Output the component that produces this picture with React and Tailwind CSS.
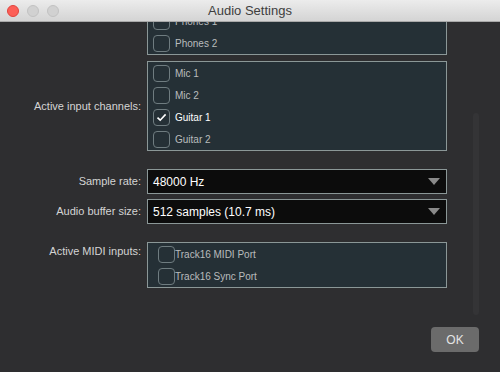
import React from 'react';

const font = { fontFamily: '"Liberation Sans", Arial, sans-serif' };

function Check({ checked, label, indent }) {
  return (
    <div className={`flex h-[22px] items-center ${indent ? 'pl-[10px]' : 'pl-[5px]'}`}>
      <div className="flex h-[17px] w-[17px] items-center justify-center rounded-[4px] border border-[#6f7c80]">
        {checked && (
          <svg width="11" height="9" viewBox="0 0 11 9">
            <path d="M1.5 4.6 L4.2 7.2 L9.6 1.4" fill="none" stroke="#ffffff" strokeWidth="1.6" />
          </svg>
        )}
      </div>
      <span className={`${indent ? 'ml-0' : 'ml-[5px]'} text-[10px] ${checked ? 'text-white' : 'text-[#b9bcbd]'}`}>
        {label}
      </span>
    </div>
  );
}

function Select({ value }) {
  return (
    <div className="flex h-[25px] w-[300px] items-center justify-between border border-[#8b9797] bg-[#0c0c0c] pl-[5px] pr-[5px]">
      <span className="text-[12px] text-white">{value}</span>
      <svg width="12" height="7" viewBox="0 0 12 7" className="mr-[1px]">
        <path d="M0 0 H12 L6 7 Z" fill="#8a8a8a" />
      </svg>
    </div>
  );
}

export default function App() {
  return (
    <div className="h-[372px] w-[500px] overflow-hidden bg-[#2e2e30]" style={font}>
      <div className="relative flex h-[22px] items-center border-b border-[#a9a9a9] bg-gradient-to-b from-[#ececec] to-[#d4d4d4]">
        <div className="flex gap-[8px] pl-[7px]">
          <div className="h-[12px] w-[12px] rounded-full border border-[#e0443e] bg-[#fc5f57]" />
          <div className="h-[12px] w-[12px] rounded-full border border-[#c2c2c2] bg-[#d1d1d1]" />
          <div className="h-[12px] w-[12px] rounded-full border border-[#c2c2c2] bg-[#d1d1d1]" />
        </div>
        <div className="absolute inset-0 flex items-center justify-center text-[13px] text-[#3e3e3e]">Audio Settings</div>
      </div>

      <div className="flex h-[296px] overflow-hidden">
        <div className="-mt-[13px] w-[447px] text-[11px] text-[#d4d4d4]">
          <div className="flex">
            <div className="w-[141px]" />
            <div className="ml-[6px] w-[300px] border border-[#8b9797] bg-[#253036]">
              <Check label="Phones 1" />
              <Check label="Phones 2" />
            </div>
          </div>

          <div className="mt-[6px] flex items-center">
            <div className="w-[141px] text-right">Active input channels:</div>
            <div className="ml-[6px] w-[300px] border border-[#8b9797] bg-[#253036]">
              <Check label="Mic 1" />
              <Check label="Mic 2" />
              <Check label="Guitar 1" checked />
              <Check label="Guitar 2" />
            </div>
          </div>

          <div className="mt-[18px] flex items-center">
            <div className="w-[141px] text-right">Sample rate:</div>
            <div className="ml-[6px]">
              <Select value="48000 Hz" />
            </div>
          </div>

          <div className="mt-[5px] flex items-center">
            <div className="w-[141px] text-right">Audio buffer size:</div>
            <div className="ml-[6px]">
              <Select value="512 samples (10.7 ms)" />
            </div>
          </div>

          <div className="mt-[18px] flex items-start">
            <div className="w-[141px] pt-[1px] text-right">Active MIDI inputs:</div>
            <div className="ml-[6px] w-[300px] border border-[#8b9797] bg-[#253036]">
              <Check label="Track16 MIDI Port" indent />
              <Check label="Track16 Sync Port" indent />
            </div>
          </div>
        </div>

        <div className="ml-[26px] mt-[91px] h-[202px] w-[6px] rounded-full bg-[#343436]" />
      </div>

      <div className="flex justify-end pr-[21px] pt-[9px]">
        <button className="h-[25px] w-[48px] rounded-[4px] bg-[#6b6b6b] text-[12px] text-[#e4e4e4]">OK</button>
      </div>
    </div>
  );
}
